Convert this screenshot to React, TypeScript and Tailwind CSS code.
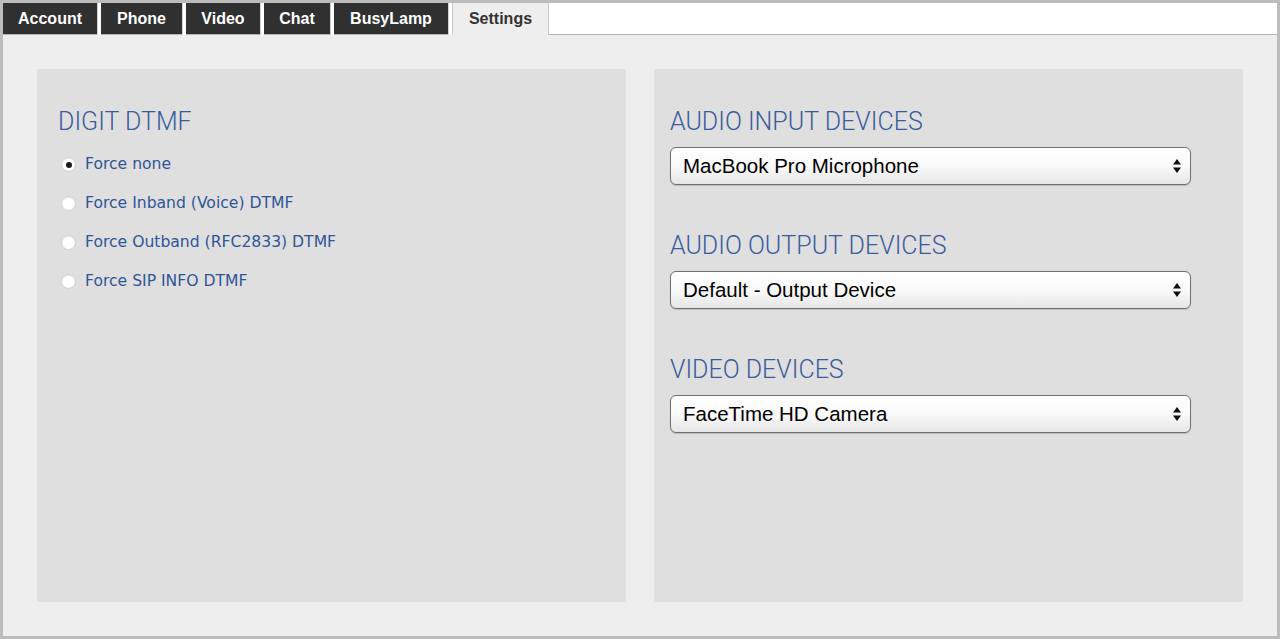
import React from 'react';

const tabs = [
  { label: 'Account', w: 'w-[94px]' },
  { label: 'Phone', w: 'w-[81px]' },
  { label: 'Video', w: 'w-[74px]' },
  { label: 'Chat', w: 'w-[66px]' },
  { label: 'BusyLamp', w: 'w-[114px]' },
];

const dtmfOptions = [
  'Force none',
  'Force Inband (Voice) DTMF',
  'Force Outband (RFC2833) DTMF',
  'Force SIP INFO DTMF',
];

const devices = [
  { title: 'AUDIO INPUT DEVICES', value: 'MacBook Pro Microphone' },
  { title: 'AUDIO OUTPUT DEVICES', value: 'Default - Output Device' },
  { title: 'VIDEO DEVICES', value: 'FaceTime HD Camera' },
];

const headingFont = { fontFamily: 'Roboto, "Liberation Sans", sans-serif' };

function Radio({ checked }: { checked: boolean }) {
  return (
    <span className="w-[15px] h-[15px] rounded-full bg-white border border-[#cfcfcf] shadow-[inset_0_1px_1px_rgba(0,0,0,0.08)] flex items-center justify-center shrink-0">
      {checked && <span className="w-[6px] h-[6px] rounded-full bg-[#1a1a1a]" />}
    </span>
  );
}

function SelectBox({ value }: { value: string }) {
  return (
    <div className="h-[38px] w-[521px] rounded-[6px] border border-[#6f6f6f] bg-gradient-to-b from-white via-[#fafafa] to-[#e6e6e6] shadow-[0_1px_1px_rgba(0,0,0,0.15)] flex items-center justify-between pl-[12px] pr-[8px]">
      <span className="text-[20.5px] text-black" style={{ fontFamily: '"Liberation Sans", Arial, sans-serif' }}>
        {value}
      </span>
      <svg width="10" height="16" viewBox="0 0 10 16">
        <path d="M5 1 L9 6.5 L1 6.5 Z" fill="#111" />
        <path d="M5 15 L9 9.5 L1 9.5 Z" fill="#111" />
      </svg>
    </div>
  );
}

export default function App() {
  return (
    <div className="h-[639px] w-[1280px] border-[3px] border-[#bcbcbc] bg-[#eeeeee] flex flex-col overflow-hidden">
      {/* Tab bar */}
      <div className="flex h-[32px] bg-white shrink-0" style={{ fontFamily: '"Liberation Sans", Arial, sans-serif' }}>
        {tabs.map((t) => (
          <div
            key={t.label}
            className={`${t.w} h-full mr-[4px] bg-[#303030] text-white font-bold text-[16px] flex items-center justify-center border-b border-[#b5b5b5] shadow-[1px_0_0_#d0d0d0]`}
          >
            {t.label}
          </div>
        ))}
        <div className="w-[97px] h-full bg-[#eeeeee] text-[#333] font-bold text-[16px] flex items-center justify-center border-x border-[#c8c8c8]">
          Settings
        </div>
        <div className="flex-1 h-full border-b border-[#b5b5b5]" />
      </div>

      {/* Content */}
      <div className="flex-1 p-[34px] flex gap-[28px]">
        <section className="w-[589px] bg-[#dfdfdf] pt-[38px] pl-[21px]">
          <h2 className="text-[25px] leading-[30px] font-light text-[#3a5c9c]" style={headingFont}>
            DIGIT DTMF
          </h2>
          <div className="mt-[8px] flex flex-col">
            {dtmfOptions.map((o, i) => (
              <label key={o} className="h-[39px] flex items-center gap-[9px] pl-[3px]">
                <Radio checked={i === 0} />
                <span className="text-[15.6px] text-[#2f5597]" style={{ fontFamily: '"DejaVu Sans", Verdana, sans-serif' }}>
                  {o}
                </span>
              </label>
            ))}
          </div>
        </section>

        <section className="w-[589px] bg-[#dfdfdf] pt-[38px] pl-[16px] flex flex-col gap-[46px]">
          {devices.map((d) => (
            <div key={d.title}>
              <h2 className="text-[25px] leading-[30px] font-light text-[#3a5c9c]" style={headingFont}>
                {d.title}
              </h2>
              <div className="mt-[10px]">
                <SelectBox value={d.value} />
              </div>
            </div>
          ))}
        </section>
      </div>
    </div>
  );
}
